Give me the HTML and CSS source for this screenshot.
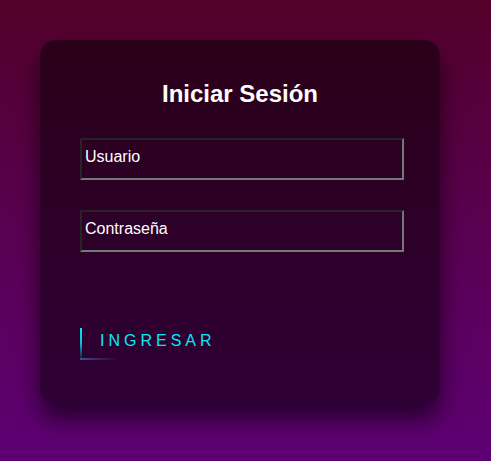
FILE: index.html
```html
<!DOCTYPE html>
<html lang="es">
<head>
<meta charset="utf-8">
<title>Iniciar Sesión</title>
<link rel="stylesheet" href="styles.css">
</head>
<body>
<div class="page">
  <div class="login-box">
    <h2 class="title">Iniciar Sesión</h2>
    <form class="form">
      <div class="user-box">
        <input class="field" type="text" placeholder="Usuario">
      </div>
      <div class="user-box">
        <input class="field" type="password" placeholder="Contraseña">
      </div>
      <a href="#" class="submit">
        <span class="line line-left"></span>
        <span class="line line-bottom"></span>
        Ingresar
      </a>
    </form>
  </div>
</div>
</body>
</html>
```

FILE: styles.css
```css
html, body {
  margin: 0;
  padding: 0;
  height: 100%;
}

body {
  font-family: "Liberation Sans", Arial, sans-serif;
  background: linear-gradient(180deg, #53002a 0%, #5a0052 50%, #5e0074 100%);
  min-height: 461px;
}

.page {
  padding: 40px;
}

.login-box {
  width: 400px;
  box-sizing: border-box;
  padding: 40px;
  background: rgba(0, 0, 0, 0.5);
  border-radius: 16px;
  box-shadow: 0 15px 25px rgba(0, 0, 0, 0.6);
}

.title {
  margin: 0 0 30px;
  padding: 0;
  color: #fff;
  text-align: center;
  font-size: 24px;
  font-weight: bold;
}

.user-box {
  margin-bottom: 30px;
}

.field {
  display: block;
  box-sizing: border-box;
  width: 324px;
  height: 42px;
  margin: 0;
  padding: 8px 3px 12px;
  font-family: "Liberation Sans", Arial, sans-serif;
  font-size: 16px;
  color: #fff;
  background: transparent;
  border: 2px solid;
  border-color: #282326 #777777 #777777 #282326;
  outline: none;
}

.field::placeholder {
  color: #fff;
  opacity: 1;
}

.submit {
  position: relative;
  display: inline-block;
  margin-top: 40px;
  padding: 10px 20px;
  color: #03e9f4;
  font-size: 16px;
  text-decoration: none;
  text-transform: uppercase;
  letter-spacing: 4px;
  overflow: hidden;
}

.line {
  position: absolute;
  display: block;
}

.line-left {
  left: 0;
  top: 6px;
  width: 2px;
  height: 32px;
  background: linear-gradient(180deg, #03e9f4 0%, #03c8dc 45%, rgba(3, 233, 244, 0) 100%);
}

.line-bottom {
  left: 0;
  bottom: 0;
  width: 38px;
  height: 2px;
  background: linear-gradient(90deg, rgba(60, 90, 140, 0.9) 0%, rgba(60, 80, 130, 0.5) 50%, rgba(60, 80, 130, 0) 100%);
}
```
